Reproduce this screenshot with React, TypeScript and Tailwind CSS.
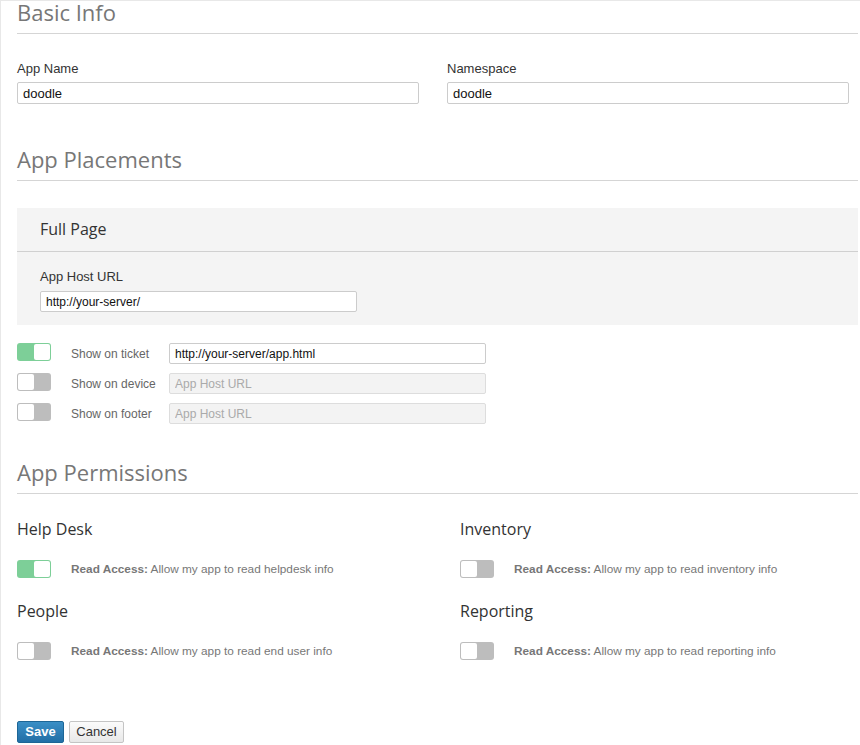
import React from 'react';

const sans = "font-['Liberation_Sans',Arial,sans-serif]";
const open = "font-['Open_Sans',sans-serif]";

// 开关组件
const Toggle = ({ on }: { on?: boolean }) => (
  <div
    className={`flex h-[18px] w-[34px] shrink-0 rounded-[3px] p-px ${
      on ? 'justify-end bg-[#7dcf98]' : 'justify-start bg-[#bdbdbd]'
    }`}
  >
    <div className="h-[16px] w-[16px] rounded-[2px] bg-white" />
  </div>
);

const SectionTitle = ({ children, className = '' }: { children: React.ReactNode; className?: string }) => (
  <div className={className}>
    <h2 className={`${open} text-[22px] leading-[23px] text-[#777]`}>{children}</h2>
    <div className="mt-[9px] h-px bg-[#d5d5d5]" />
  </div>
);

const placements = [
  { label: 'Show on ticket', on: true, value: 'http://your-server/app.html' },
  { label: 'Show on device', on: false, value: '' },
  { label: 'Show on footer', on: false, value: '' },
];

const Permission = ({ title, on, what }: { title: string; on?: boolean; what: string }) => (
  <div>
    <div className={`${open} text-[16px] leading-[24px] text-[#333]`}>{title}</div>
    <div className="mt-[19px] flex items-center">
      <Toggle on={on} />
      <div className={`${sans} ml-[20px] text-[11.8px] leading-[18px] text-[#777]`}>
        <span className="font-bold">Read Access:</span> Allow my app to read {what} info
      </div>
    </div>
  </div>
);

export default function App() {
  return (
    <div className={`${sans} h-[745px] w-[860px] overflow-hidden border-l border-t border-[#e8e8e8] bg-white pl-4 pr-[2px] text-[13px] text-[#333]`}>
      {/* 基本信息 */}
      <SectionTitle>Basic Info</SectionTitle>
      <div className="mt-[26px] flex">
        <div className="w-[430px]">
          <label className="block leading-[18px]">App Name</label>
          <input
            readOnly
            value="doodle"
            className="mt-[4px] block h-[22px] w-[402px] rounded-[2px] border border-[#ccc] bg-white px-[5px] text-[13px] text-[#111] outline-none"
          />
        </div>
        <div className="w-[402px]">
          <label className="block leading-[18px]">Namespace</label>
          <input
            readOnly
            value="doodle"
            className="mt-[4px] block h-[22px] w-[402px] rounded-[2px] border border-[#ccc] bg-white px-[5px] text-[13px] text-[#111] outline-none"
          />
        </div>
      </div>

      {/* 应用位置 */}
      <SectionTitle className="mt-[44px]">App Placements</SectionTitle>
      <div className="mt-[27px] bg-[#f4f4f4]">
        <div className={`${open} border-b border-[#d0d0d0] px-[23px] pb-[10px] pt-[9px] text-[16px] leading-[24px] text-[#333]`}>
          Full Page
        </div>
        <div className="px-[23px] pb-[13px] pt-[16px]">
          <label className="block leading-[18px]">App Host URL</label>
          <input
            readOnly
            value="http://your-server/"
            className="mt-[5px] block h-[21px] w-[317px] rounded-[2px] border border-[#ccc] bg-white px-[5px] text-[12px] text-[#111] outline-none"
          />
        </div>
      </div>

      <div className="mt-[18px] flex flex-col gap-[9px]">
        {placements.map((p) => (
          <div key={p.label} className="flex items-start">
            <Toggle on={p.on} />
            <div className="ml-[20px] w-[98px] pt-[2px] text-[12px] leading-[18px] text-[#666]">{p.label}</div>
            <input
              readOnly
              value={p.value}
              placeholder="App Host URL"
              disabled={!p.on}
              className={`block h-[21px] w-[317px] rounded-[2px] border px-[5px] text-[12px] outline-none placeholder:text-[#aaa] ${
                p.on ? 'border-[#ccc] bg-white text-[#111]' : 'border-[#ddd] bg-[#f3f3f3]'
              }`}
            />
          </div>
        ))}
      </div>

      {/* 应用权限 */}
      <SectionTitle className="mt-[37px]">App Permissions</SectionTitle>
      <div className="mt-[23px] flex">
        <div className="flex w-[443px] flex-col gap-[21px]">
          <Permission title="Help Desk" on what="helpdesk" />
          <Permission title="People" what="end user" />
        </div>
        <div className="flex flex-col gap-[21px]">
          <Permission title="Inventory" what="inventory" />
          <Permission title="Reporting" what="reporting" />
        </div>
      </div>

      {/* 按钮 */}
      <div className="mt-[61px] flex gap-[5px]">
        <button className="h-[22px] w-[47px] rounded-[2px] border border-[#1d6696] bg-gradient-to-b from-[#3a8fc6] to-[#226fa6] text-[13px] font-bold text-white">
          Save
        </button>
        <button className="h-[22px] w-[55px] rounded-[2px] border border-[#c4c4c4] bg-gradient-to-b from-[#fbfbfb] to-[#e8e8e8] text-[13px] text-[#333]">
          Cancel
        </button>
      </div>
    </div>
  );
}
